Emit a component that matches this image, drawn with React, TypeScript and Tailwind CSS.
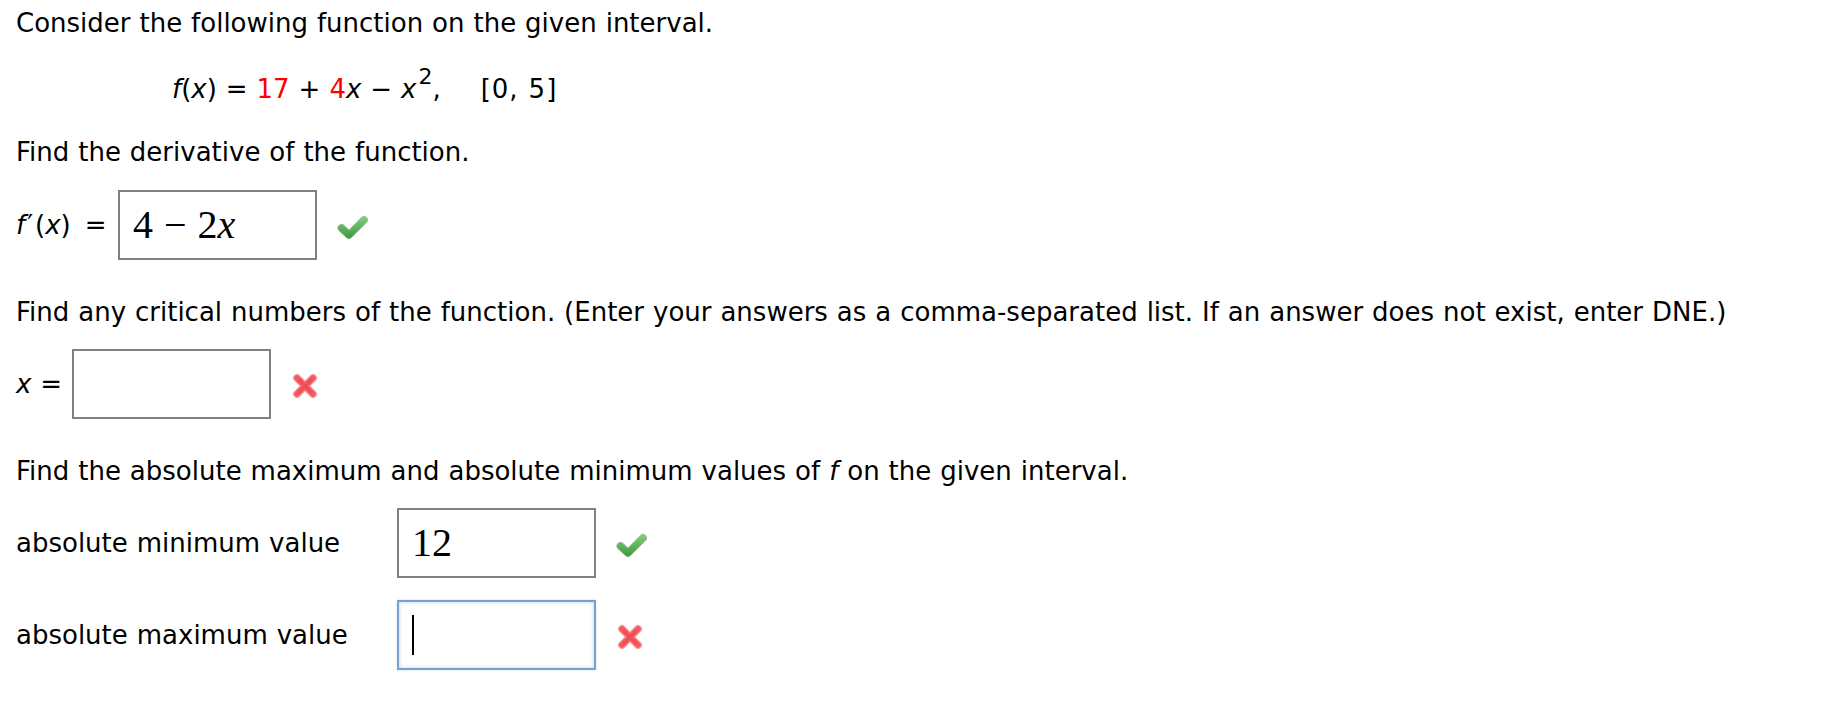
import type { ReactNode } from "react";

function CheckIcon({ id }: { id: string }) {
  return (
    <svg width="31" height="26" viewBox="0 0 31 26" className="shrink-0">
      <defs>
        <linearGradient id={id} x1="0" y1="0" x2="0" y2="26" gradientUnits="userSpaceOnUse">
          <stop offset="0" stopColor="#8fd488" />
          <stop offset="0.55" stopColor="#5bb25a" />
          <stop offset="1" stopColor="#3f923f" />
        </linearGradient>
      </defs>
      <polyline
        points="4.5,14 12,21 27,6"
        fill="none"
        stroke="#4c8f4a"
        strokeOpacity="0.55"
        strokeWidth="8"
        strokeLinecap="round"
        strokeLinejoin="round"
      />
      <polyline
        points="4.5,14 12,21 27,6"
        fill="none"
        stroke={`url(#${id})`}
        strokeWidth="6.5"
        strokeLinecap="round"
        strokeLinejoin="round"
      />
    </svg>
  );
}

function CrossIcon() {
  return (
    <svg width="26" height="26" viewBox="0 0 26 26" className="shrink-0">
      <g strokeLinecap="round" fill="none">
        <path d="M5 5 L21 21 M21 5 L5 21" stroke="#fb9fa1" strokeWidth="8" />
        <path d="M5 5 L21 21 M21 5 L5 21" stroke="#f25a60" strokeWidth="5.5" />
        <path d="M7 7 L19 19 M19 7 L7 19" stroke="#e63c45" strokeWidth="2" strokeOpacity="0.45" />
      </g>
    </svg>
  );
}

function AnswerBox({ children, focused = false }: { children?: ReactNode; focused?: boolean }) {
  return (
    <div
      className={
        focused
          ? "flex h-[70px] w-[199px] shrink-0 items-center border-2 border-[#78a2cd] bg-white pl-[13px] shadow-[inset_0_0_4px_#bcd5ee,0_0_2px_#c6dcf2]"
          : "flex h-[70px] w-[199px] shrink-0 items-center border-2 border-[#808080] bg-white pl-[13px]"
      }
    >
      <span className="font-['Liberation_Serif',serif] text-[40px] leading-none text-black">{children}</span>
    </div>
  );
}

export default function App() {
  return (
    <div className="min-h-screen bg-white pl-[16px] pt-[8px] font-['DejaVu_Sans',sans-serif] text-[26px] leading-[31px] text-black [word-spacing:0.7px]">
      <p>Consider the following function on the given interval.</p>

      <p className="mt-[35px] whitespace-nowrap pl-[156px]">
        <i>f</i>(<i>x</i>) = <span className="text-[#ff0000]">17</span> + <span className="text-[#ff0000]">4</span>
        <i>x</i> − <i>x</i>
        <span className="relative top-[-14px] ml-[2px] text-[22px] leading-none">2</span>,
        <span className="ml-[40px] tracking-[1px]">[0, 5]</span>
      </p>

      <p className="mt-[32px]">Find the derivative of the function.</p>

      <div className="mt-[22px] flex h-[70px] items-center">
        <span className="w-[102px] shrink-0 whitespace-nowrap">
          <i>f</i>
          <span className="ml-[2px] mr-[2px]">′</span>(<i>x</i>)<span className="ml-[14px]">=</span>
        </span>
        <AnswerBox>
          4<span className="mx-[11px]">−</span>2<i>x</i>
        </AnswerBox>
        <div className="ml-[20px] mt-[4px]">
          <CheckIcon id="check-derivative" />
        </div>
      </div>

      <p className="mt-[37px] whitespace-nowrap">
        Find any critical numbers of the function. (Enter your answers as a comma-separated list. If an answer does
        not exist, enter DNE.)
      </p>

      <div className="mt-[21px] flex h-[70px] items-center">
        <span className="w-[56px] shrink-0 whitespace-nowrap">
          <i>x</i> =
        </span>
        <AnswerBox />
        <div className="ml-[21px] mt-[3px]">
          <CrossIcon />
        </div>
      </div>

      <p className="mt-[37px] whitespace-nowrap">
        Find the absolute maximum and absolute minimum values of <i>f</i> on the given interval.
      </p>

      <div className="mt-[21px] flex h-[70px] items-center">
        <span className="w-[381px] shrink-0">absolute minimum value</span>
        <AnswerBox>12</AnswerBox>
        <div className="ml-[20px] mt-[4px]">
          <CheckIcon id="check-minimum" />
        </div>
      </div>

      <div className="mt-[22px] flex h-[70px] items-center">
        <span className="w-[381px] shrink-0">absolute maximum value</span>
        <AnswerBox focused>
          <span className="block h-[40px] w-[2px] bg-black" />
        </AnswerBox>
        <div className="ml-[21px] mt-[3px]">
          <CrossIcon />
        </div>
      </div>
    </div>
  );
}
